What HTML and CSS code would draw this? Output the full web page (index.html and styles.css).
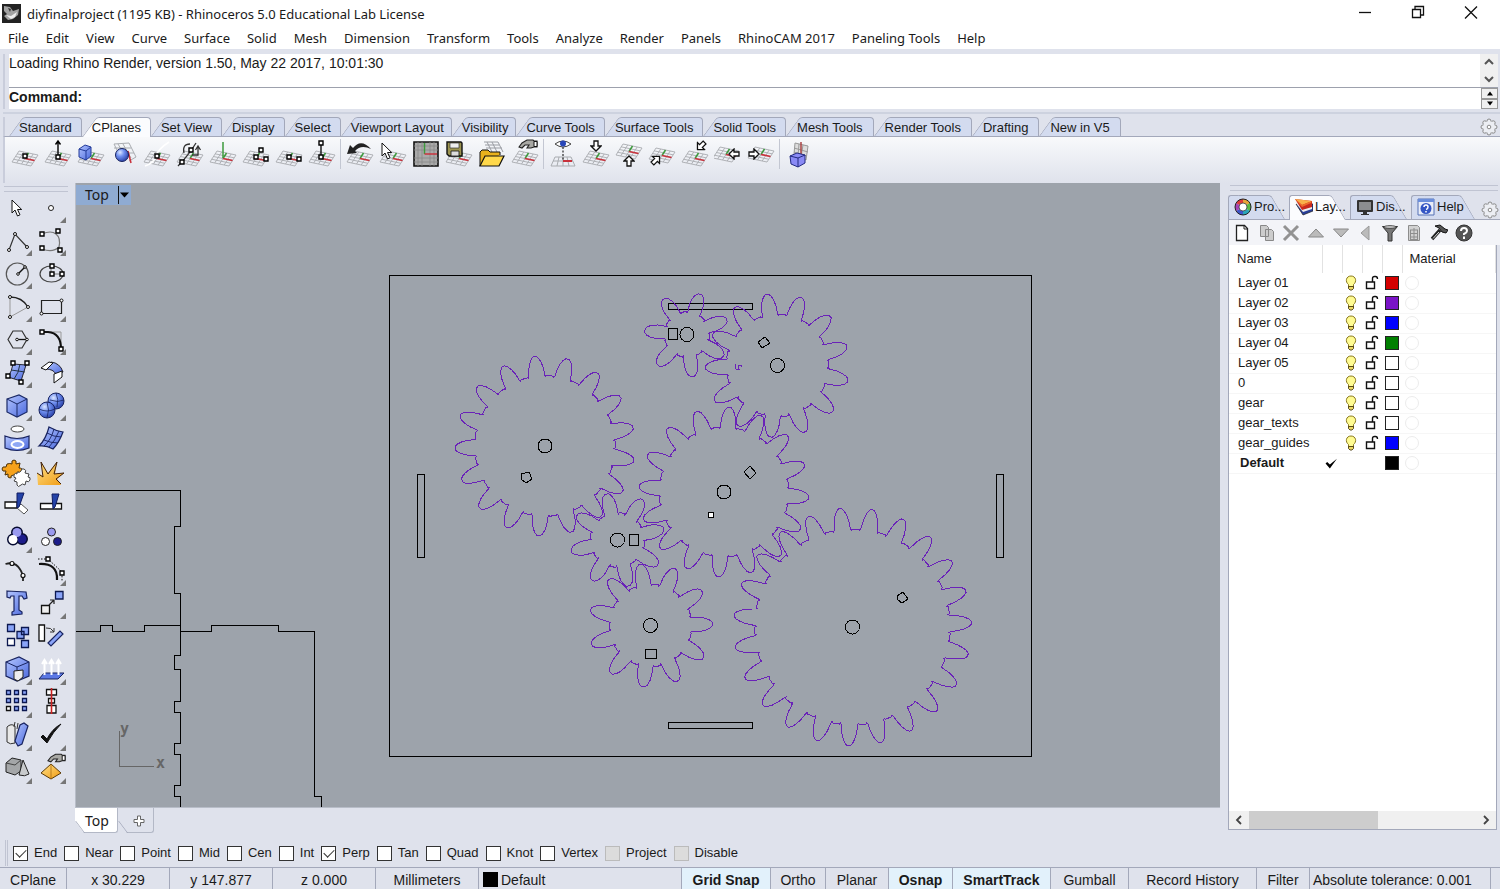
FILE: index.html
```html
<!DOCTYPE html>
<html lang="en">
<head>
<meta charset="utf-8">
<title>diyfinalproject (1195 KB) - Rhinoceros 5.0 Educational Lab License</title>
<link rel="stylesheet" href="styles.css">
</head>
<body>
<svg class="defs" aria-hidden="true">
  <defs>
    <linearGradient id="blue" x1="0" y1="0" x2="1" y2="1"><stop offset="0" stop-color="#b4c6ff"/><stop offset="1" stop-color="#4a68dd"/></linearGradient>
    <radialGradient id="ball" cx=".35" cy=".3" r=".8"><stop offset="0" stop-color="#dbe6ff"/><stop offset=".4" stop-color="#6f8ff0"/><stop offset="1" stop-color="#1e349c"/></radialGradient>
    <linearGradient id="gold" x1="0" y1="0" x2="1" y2="1"><stop offset="0" stop-color="#ffe28a"/><stop offset="1" stop-color="#f09a12"/></linearGradient>
    <symbol id="plane" viewBox="0 0 28 30">
      <path d="M8 12l19 4M6 14.800l19 4M4.500 17.500l19 4M2.500 20.200l19 4M1 23l19 4M8 12L1 23M12.700 13L5.700 24M17.500 14l-7 11M22.200 15l-7 11M27 16l-7 11" fill="none" stroke="#a9acb0" stroke-width=".9"/>
      <path d="M14 19.500L17.500 14" stroke="#3d9a3d" stroke-width="1.500"/><path d="M14 19.500l9.500 2" stroke="#c8323c" stroke-width="1.700"/>
    </symbol>
    <symbol id="node" viewBox="0 0 6 6"><path d="M1 1h4v4H1z" fill="#fff" stroke="#000" stroke-width="1.400"/></symbol>
    <symbol id="cursor" viewBox="0 0 12 18"><path d="M1 1v13l3-3 2.500 6 2.500-1.200L6.500 10.500h4.200z" fill="#fff" stroke="#111"/></symbol>
    <symbol id="hand" viewBox="0 0 20 10"><path d="M1 8l3-4 5-3h6l1 1h3v6h-3l-3 1H9l2-3H7L4 9z" fill="#a8a8a4" stroke="#222" stroke-width="1.100"/><path d="M16 2.500v5h3v-5z" fill="#fff" stroke="#111"/></symbol>
    <symbol id="darrow" viewBox="0 0 12 12"><path d="M4 1h4v5h3L6 11 1 6h3z" fill="#fff" stroke="#111" stroke-width="1.300"/></symbol>
    <symbol id="cog" viewBox="0 0 18 18"><g fill="#eceef3" stroke="#8a8a8a"><circle cx="9" cy="3" r="2"/><circle cx="13.200" cy="4.800" r="2"/><circle cx="15" cy="9" r="2"/><circle cx="13.200" cy="13.200" r="2"/><circle cx="9" cy="15" r="2"/><circle cx="4.800" cy="13.200" r="2"/><circle cx="3" cy="9" r="2"/><circle cx="4.800" cy="4.800" r="2"/></g><circle cx="9" cy="9" r="6" fill="#eceef3"/><circle cx="9" cy="9" r="1.800" fill="#fff" stroke="#8a8a8a"/></symbol>
    <symbol id="bulb" viewBox="0 0 12 16"><path d="M3.500 9.500C0 7 .8 1 6 1s6 6 2.500 8.500V12h-5z" fill="#fffb92" stroke="#8a7a20"/><path d="M3.500 11.500h5v2l-1.500 1.500H5l-1.500-1.500z" fill="#ecd960" stroke="#4a3b10" stroke-width=".9"/></symbol>
    <symbol id="lock" viewBox="0 0 14 16"><path d="M1.500 7h8v6.500h-8z" fill="#fff" stroke="#111" stroke-width="1.400"/><path d="M7.500 7V3.500q0-2 2-2h1q2 0 2 2.500" fill="none" stroke="#111" stroke-width="1.400"/></symbol>
    <symbol id="mat" viewBox="0 0 16 16"><circle cx="8" cy="8" r="6.500" fill="none" stroke="#ececec"/></symbol>
  </defs>
</svg>

<header class="titlebar">
  <svg class="app-icon" viewBox="0 0 19 19"><path d="M0 0h19v19H0z" fill="#222"/><path d="M2 2l6 1 3 4 6-2-1 6-5 4-5 1-4-4 3-2-3-3z" fill="#a2a2a2"/><path d="M4 11l5 1 6-4-2 5-4 2z" fill="#eee"/><path d="M6 4l3 1-1 3z" fill="#333"/></svg>
  <h1 class="title">diyfinalproject (1195 KB) - Rhinoceros 5.0 Educational Lab License</h1>
  <button class="win" aria-label="Minimize"><svg viewBox="0 0 14 14"><path d="M1 7.500h12" stroke="#111" stroke-width="1.300"/></svg></button>
  <button class="win" aria-label="Restore"><svg viewBox="0 0 14 14"><path d="M1.500 4.500h8v8h-8zM4 4.500v-3h8.500V10h-3" fill="none" stroke="#111" stroke-width="1.300"/></svg></button>
  <button class="win" aria-label="Close"><svg viewBox="0 0 14 14"><path d="M1 1.500l12 12M13 1.500l-12 12" stroke="#111" stroke-width="1.300"/></svg></button>
</header>

<nav class="menubar">
  <button>File</button><button>Edit</button><button>View</button><button>Curve</button><button>Surface</button><button>Solid</button><button>Mesh</button><button>Dimension</button><button>Transform</button><button>Tools</button><button>Analyze</button><button>Render</button><button>Panels</button><button>RhinoCAM 2017</button><button>Paneling Tools</button><button>Help</button>
</nav>

<section class="command">
  <div class="history"><p>Loading Rhino Render, version 1.50, May 22 2017, 10:01:30</p>
    <div class="vscroll"><button aria-label="Scroll up"><svg viewBox="0 0 10 8"><path d="M1 6l4-4 4 4" fill="none" stroke="#555" stroke-width="2"/></svg></button><button aria-label="Scroll down"><svg viewBox="0 0 10 8"><path d="M1 2l4 4 4-4" fill="none" stroke="#555" stroke-width="2"/></svg></button></div>
  </div>
  <div class="prompt"><label for="cmd">Command:</label><input id="cmd" type="text">
    <div class="spin"><button aria-label="Previous"><svg viewBox="0 0 8 5"><path d="M1 4.500l3-4 3 4z"/></svg></button><button aria-label="Next"><svg viewBox="0 0 8 5"><path d="M1 .5l3 4 3-4z"/></svg></button></div>
  </div>
</section>

<section class="toolbars">
  <div class="tabs">
    <button class="tab">Standard</button><button class="tab on">CPlanes</button><button class="tab">Set View</button><button class="tab">Display</button><button class="tab">Select</button><button class="tab tight">Viewport Layout</button><button class="tab tight">Visibility</button><button class="tab">Curve Tools</button><button class="tab">Surface Tools</button><button class="tab">Solid Tools</button><button class="tab wide">Mesh Tools</button><button class="tab wide">Render Tools</button><button class="tab wide">Drafting</button><button class="tab wide">New in V5</button>
    <button class="cog" aria-label="Toolbar options"><svg viewBox="0 0 18 18"><use href="#cog"/></svg></button>
  </div>
  <div class="tools">
    <button aria-label="CPlane origin"><svg viewBox="0 0 28 30"><use href="#plane"/><use href="#node" x="11" y="14" width="6" height="6"/></svg></button>
    <button aria-label="CPlane elevation"><svg viewBox="0 0 28 30"><use href="#plane"/><path d="M14 17V3M11.500 5.500L14 2l2.500 3.500" fill="none" stroke="#000" stroke-width="1.400"/><use href="#node" x="11" y="15" width="6" height="6"/></svg></button>
    <button aria-label="CPlane to object"><svg viewBox="0 0 28 30"><use href="#plane"/><path d="M2 10l6-4 6 2v9l-5 4-7-3z" fill="url(#blue)" stroke="#223a99"/><path d="M2 10l7 2 5-4M9 12v9" stroke="#223a99" fill="none"/></svg></button>
    <button aria-label="CPlane to surface"><svg viewBox="0 0 28 30"><path d="M4 5l15-1 7 14-7 4M8 5l7 12M13 5l8 14M4 9h17M6 14h18M4 5l4 8" stroke="#a9acb0" fill="none"/><path d="M18 12l3 12" stroke="#c8323c" stroke-width="1.500"/><circle cx="12" cy="16" r="6.500" fill="url(#ball)" stroke="#18235f"/></svg></button>
    <button aria-label="CPlane to curve"><svg viewBox="0 0 28 30"><use href="#plane"/><path d="M2 27q9-3 11-10T26 3" stroke="#fff" fill="none" stroke-width="1.500"/><use href="#node" x="11" y="14" width="6" height="6"/></svg></button>
    <button aria-label="CPlane perpendicular to curve"><svg viewBox="0 0 28 30"><use href="#plane"/><path d="M2 27q10-10 18-23M8 14Q6 5 14 5M16 16h6V8M19.500 11L22 7l2.500 4" stroke="#333" fill="none" stroke-width="1.300"/><use href="#node" x="12" y="8" width="6" height="6"/><use href="#node" x="3" y="20" width="6" height="6"/></svg></button>
    <button aria-label="CPlane Z axis"><svg viewBox="0 0 28 30"><use href="#plane"/><path d="M14 19V3" stroke="#3d9a3d" stroke-width="1.500"/></svg></button>
    <button aria-label="CPlane 3 points"><svg viewBox="0 0 28 30"><use href="#plane"/><use href="#node" x="11" y="15" width="6" height="6"/><use href="#node" x="16" y="8" width="6" height="6"/><use href="#node" x="21" y="17" width="6" height="6"/></svg></button>
    <button aria-label="CPlane X axis"><svg viewBox="0 0 28 30"><use href="#plane"/><use href="#node" x="11" y="15" width="6" height="6"/><use href="#node" x="21" y="17" width="6" height="6"/></svg></button>
    <button aria-label="CPlane vertical"><svg viewBox="0 0 28 30"><use href="#plane"/><path d="M13 18V5" stroke="#000" stroke-width="1.300"/><use href="#node" x="10" y="15" width="6" height="6"/><use href="#node" x="10" y="1" width="6" height="6"/></svg></button>
    <span class="sep"></span>
    <button aria-label="Previous CPlane"><svg viewBox="0 0 28 30"><use href="#plane"/><path d="M25 10Q15-1 7 9L4 6 1 15l10-1-2-2q6-7 16-2z" fill="#222"/></svg></button>
    <button aria-label="Select CPlane"><svg viewBox="0 0 28 30"><use href="#plane"/><use href="#cursor" x="2" y="3" width="12" height="18"/></svg></button>
    <button aria-label="Grid"><svg viewBox="0 0 28 30"><path d="M2 3h24v24H2z" fill="#aaa" stroke="#111" stroke-width="1.600"/><path d="M6 3v24M10 3v24M18 3v24M22 3v24M2 7h24M2 11h24M2 19h24M2 23h24" stroke="#888" stroke-width=".8"/><path d="M12.500 4v11" stroke="#3d9a3d" stroke-width="1.500"/><path d="M12.500 15H25" stroke="#c8323c" stroke-width="1.500"/></svg></button>
    <button aria-label="Save CPlane"><svg viewBox="0 0 28 30"><use href="#plane"/><path d="M2 3h14l1 1v13H4l-2-2z" fill="#9c9450" stroke="#111" stroke-width="1.400"/><path d="M5 4h9v5H5z" fill="#eee" stroke="#333" stroke-width=".7"/><path d="M6 12h8v5H6z" fill="#ddd" stroke="#111" stroke-width=".8"/></svg></button>
    <button aria-label="Open CPlane"><svg viewBox="0 0 28 30"><path d="M6 3h14l5 10M9 3l5 10M14 3l5 10M7 6h14M8 9h16" stroke="#9a9da3" fill="none"/><path d="M2 27V13l2-2h6l2 2h10v3" fill="#e9b21c" stroke="#111"/><path d="M2 27l5-10h19l-5 10z" fill="#ffd84a" stroke="#111" stroke-width="1.200"/></svg></button>
    <button aria-label="Edit CPlane"><svg viewBox="0 0 28 30"><use href="#plane"/><use href="#hand" x="7" y="0" width="20" height="10"/></svg></button>
    <span class="sep"></span>
    <button aria-label="CPlane to view"><svg viewBox="0 0 28 30"><path d="M6 18h16l4 9H2zM4 22h20M10 18l-2 9M14 18v9M18 18l2 9" fill="none" stroke="#a9acb0"/><path d="M14 8v14" stroke="#000" stroke-dasharray="2 1.500"/><path d="M14 22h9" stroke="#c8323c" stroke-width="2"/><path d="M6 5q8-6 16 0-8 6-16 0z" fill="#fff" stroke="#444"/><circle cx="14" cy="4.500" r="3" fill="#2846b8"/></svg></button>
    <button aria-label="World top"><svg viewBox="0 0 28 30"><use href="#plane"/><use href="#darrow" x="8" y="1" width="12" height="12"/></svg></button>
    <button aria-label="World bottom"><svg viewBox="0 0 28 30"><use href="#plane" y="-7"/><use href="#darrow" transform="translate(8 28) scale(1 -1)" width="12" height="12"/></svg></button>
    <button aria-label="World front"><svg viewBox="0 0 28 30"><use href="#plane" y="-3"/><use href="#darrow" transform="rotate(225 8 21) translate(2 15)" width="12" height="12"/></svg></button>
    <button aria-label="World back"><svg viewBox="0 0 28 30"><use href="#plane"/><use href="#darrow" transform="rotate(45 20 7) translate(14 1)" width="12" height="12"/></svg></button>
    <button aria-label="World left"><svg viewBox="0 0 28 30"><use href="#plane" x="-2" y="-4"/><use href="#darrow" transform="rotate(90 20 15) translate(14 9)" width="12" height="12"/></svg></button>
    <button aria-label="World right"><svg viewBox="0 0 28 30"><use href="#plane" y="-4"/><use href="#darrow" transform="rotate(-90 7 15) translate(1 9)" width="12" height="12"/></svg></button>
    <span class="sep"></span>
    <button aria-label="Named CPlanes"><svg viewBox="0 0 28 30"><path d="M10 4l13 3-2 14-12-6zM14 5l-1 12M18 6l-2 12M9 9l14 4M9 13l13 4" fill="#ddd" stroke="#999"/><path d="M16 3v12" stroke="#a44" stroke-width="1.500"/><path d="M5 17l7-3 8 2v8l-7 4-7-3z" fill="#8a8af5" stroke="#222a80"/><path d="M5 17l8 2 7-3M13 19v9" fill="none" stroke="#222a80"/></svg></button>
  </div>
</section>

<main class="work">
  <aside class="palette">
    <button aria-label="Select"><svg viewBox="0 0 33 33"><use href="#cursor" x="11" y="8" width="12" height="18"/></svg></button>
    <button class="more" aria-label="Point"><svg viewBox="0 0 33 33"><circle cx="17" cy="17" r="2.500" fill="#fff" stroke="#222"/></svg></button>
    <button class="more" aria-label="Polyline"><svg viewBox="0 0 33 33"><path d="M9 26l6-16 12 13" fill="none" stroke="#333" stroke-width="1.200"/><g fill="#fff" stroke="#111"><circle cx="9" cy="26" r="1.500"/><circle cx="15" cy="10" r="1.500"/><circle cx="27" cy="23" r="1.500"/></g></svg></button>
    <button class="more" aria-label="Curve"><svg viewBox="0 0 33 33"><path d="M8 10q9-4 14 0t3 13q-6 6-17 2" fill="none" stroke="#777" stroke-width="1.200"/><use href="#node" x="5" y="7" width="6" height="6"/><use href="#node" x="21" y="4" width="6" height="6"/><use href="#node" x="5" y="21" width="6" height="6"/><use href="#node" x="23" y="23" width="6" height="6"/></svg></button>
    <button class="more" aria-label="Circle"><svg viewBox="0 0 33 33"><circle cx="17.300" cy="17" r="11" fill="none" stroke="#555" stroke-width="1.200"/><path d="M18 17l7-7" stroke="#111" stroke-width="1.400"/><g fill="#fff" stroke="#111"><circle cx="18" cy="17" r="1.300"/><circle cx="25" cy="10" r="1.300"/></g></svg></button>
    <button class="more" aria-label="Ellipse"><svg viewBox="0 0 33 33"><ellipse cx="17.500" cy="17" rx="11.500" ry="8" fill="none" stroke="#444" stroke-width="1.200"/><path d="M17 10v7h11" fill="none" stroke="#777"/><use href="#node" x="15" y="6" width="6" height="6"/><use href="#node" x="15" y="14" width="6" height="6"/><use href="#node" x="25" y="14" width="6" height="6"/></svg></button>
    <button class="more" aria-label="Arc"><svg viewBox="0 0 33 33"><path d="M28 17L10 27V7" fill="none" stroke="#999"/><path d="M10 7q12 0 18 10" fill="none" stroke="#222" stroke-width="1.300"/><g fill="#fff" stroke="#111"><circle cx="10" cy="7" r="1.500"/><circle cx="28" cy="17" r="1.500"/><circle cx="10" cy="27" r="1.500"/></g></svg></button>
    <button class="more" aria-label="Rectangle"><svg viewBox="0 0 33 33"><path d="M7.500 10.500h20v13h-20z" fill="none" stroke="#222" stroke-width="1.200"/><g fill="#fff" stroke="#111"><circle cx="7.500" cy="23.500" r="1.500"/><circle cx="27.500" cy="10.500" r="1.500"/></g></svg></button>
    <button class="more" aria-label="Polygon"><svg viewBox="0 0 33 33"><path d="M8 16.500L13 8h9l5 8.500-5 8.500h-9z" fill="none" stroke="#333" stroke-width="1.200"/><path d="M17 16.500h10" stroke="#111" stroke-width="1.300"/><g fill="#fff" stroke="#111"><circle cx="17" cy="16.500" r="1.300"/><circle cx="27" cy="16.500" r="1.300"/></g></svg></button>
    <button class="more" aria-label="Fillet"><svg viewBox="0 0 33 33"><path d="M8 9h19v17" fill="none" stroke="#999"/><path d="M8 9h6q13 1 13 17" fill="none" stroke="#111" stroke-width="2"/><use href="#node" x="5" y="6" width="6" height="6"/><use href="#node" x="24" y="23" width="6" height="6"/></svg></button>
    <button class="more" aria-label="Surface"><svg viewBox="0 0 33 33"><path d="M13 8l13 1-5 16-13-4q4-6 5-13z" fill="url(#blue)" stroke="#223"/><path d="M11 14l14 2M20 8q-1 9-6 15" fill="none" stroke="#234"/><use href="#node" x="10" y="4" width="6" height="6"/><use href="#node" x="24" y="4" width="6" height="6"/><use href="#node" x="5" y="17" width="6" height="6"/><use href="#node" x="18" y="23" width="6" height="6"/></svg></button>
    <button class="more" aria-label="Loft"><svg viewBox="0 0 33 33"><path d="M12 13l5-7q9 1 12 10l-7 2q-3-5-10-5z" fill="url(#blue)" stroke="#223"/><path d="M7 12l8-6 4 1-7 7z" fill="#fff" stroke="#111"/><path d="M20 18l8-3v6l-8 6z" fill="#fff" stroke="#111"/></svg></button>
    <button class="more" aria-label="Box"><svg viewBox="0 0 33 33"><path d="M7 10l12-4 8 4v13l-10 5-10-5z" fill="url(#blue)" stroke="#1a2966" stroke-width="1.200"/><path d="M7 10l10 5 10-5M17 15v13" fill="none" stroke="#1a2966"/></svg></button>
    <button class="more" aria-label="Boolean"><svg viewBox="0 0 33 33"><circle cx="22" cy="12" r="8" fill="url(#ball)" stroke="#18235f"/><circle cx="13" cy="21" r="8" fill="url(#ball)" stroke="#18235f"/><path d="M5 20q8 4 16 0M13 13q3 8 0 16M22 4q3 6 1 14M16 11q8 3 14 0" stroke="#18235f" fill="none" stroke-width=".8"/></svg></button>
    <button class="more" aria-label="Project"><svg viewBox="0 0 33 33"><ellipse cx="17.500" cy="7" rx="6.500" ry="3" fill="#fff" stroke="#444"/><path d="M5 14q12 5 24 0v12q-12 5-24 0z" fill="url(#blue)" stroke="#18235f" stroke-width="1.200"/><ellipse cx="17.500" cy="22.500" rx="6" ry="3.500" fill="#8fa8f4" stroke="#fff" stroke-width="2"/></svg></button>
    <button class="more" aria-label="Mesh"><svg viewBox="0 0 33 33"><path d="M15 5q7 4 14 5-4 11-10 17-7-4-14-3 7-7 10-19z" fill="url(#blue)" stroke="#18235f" stroke-width="1.200"/><path d="M20 7q-3 11-10 17M25 9q-4 10-10 16M13 11q7 4 14 4M10 18q7 3 14 3" fill="none" stroke="#18235f" stroke-width=".9"/></svg></button>
    <button aria-label="Join"><svg viewBox="0 0 33 33"><path d="M7 9q3-1 5 0-1-4 2-4t2 4l4-1-1 5q4 0 3 3t-4 1l-2 4q-3-2-5 0 1 2-1 2-3 0-2-4l-3 1 1-4q-4 1-4-2t4-2z" fill="#f6a21c" stroke="#4d3208"/><path d="M17 17q3 1 4-1 0-3 3-2t1 4l4 1-1 3q3 0 2 3t-4 1l-1 4q-3-2-4 0-3 3-4 0v-3l-3-1 2-3q-3 0-2-3t3-1z" fill="#fff" stroke="#444"/></svg></button>
    <button aria-label="Explode"><svg viewBox="0 0 33 33"><path d="M3 18l6 3L7 7l7 11L23 7l-2 12 9-1-7 6 4 6H4z" fill="url(#gold)"/><path d="M3 18l6 4L7 7l7 12L23 7l-3 12 10-1-8 6 5 5" fill="none" stroke="#41210a"/></svg></button>
    <button aria-label="Trim"><svg viewBox="0 0 33 33"><path d="M5 14h12v6H5z" fill="#fff" stroke="#111" stroke-width="1.300"/><path d="M17 20l4-4 7 6-4 4z" fill="#fff" stroke="#555"/><path d="M17 5h7l-5 14-2 1z" fill="#2443a8" stroke="#101c60"/></svg></button>
    <button aria-label="Split"><svg viewBox="0 0 33 33"><path d="M6.500 15.500h21V21h-21z" fill="#fff" stroke="#111" stroke-width="1.300"/><path d="M18 6h7l-4 13-2 2z" fill="#2443a8" stroke="#101c60"/></svg></button>
    <button class="more" aria-label="Group"><svg viewBox="0 0 33 33"><g stroke="#050a30" stroke-width="4"><circle cx="17" cy="11.500" r="4"/><circle cx="13" cy="18.500" r="4"/><circle cx="22" cy="18" r="4"/></g><circle cx="22" cy="18" r="4.500" fill="#1c1c8a"/><circle cx="17" cy="11.500" r="4.500" fill="#9a9af0"/><circle cx="13" cy="18.500" r="4.500" fill="#fff"/></svg></button>
    <button aria-label="Ungroup"><svg viewBox="0 0 33 33"><g stroke="#222"><circle cx="17.500" cy="11" r="4" fill="#9a9af0"/><circle cx="11.500" cy="20.500" r="4" fill="#fff"/><circle cx="23.500" cy="20.500" r="4" fill="#1c1c8a"/></g></svg></button>
    <button aria-label="Edit points"><svg viewBox="0 0 33 33"><path d="M5.500 10q10-3 15 6 3 5 2.500 11" fill="none" stroke="#222" stroke-width="1.800"/><g fill="#fff" stroke="#111" stroke-width="1.200"><circle cx="12" cy="9.500" r="2"/><circle cx="23" cy="21.500" r="2"/></g></svg></button>
    <button class="more" aria-label="Control points"><svg viewBox="0 0 33 33"><path d="M5 10q19-1 18 16" fill="none" stroke="#111" stroke-width="2.200"/><path d="M4 5h10l14 13v9" fill="none" stroke="#111" stroke-dasharray="1.500 1.500"/><use href="#node" x="11" y="2" width="6" height="6"/><use href="#node" x="25" y="16" width="6" height="6"/></svg></button>
    <button aria-label="Text"><svg viewBox="0 0 33 33"><path d="M7 4l19 1 1 6-3 1-2-3h-3v14l3 2v2l-10 1v-3l2-1V9h-3l-1 2-3-1z" fill="url(#blue)" stroke="#18235f" stroke-width="1.200"/></svg></button>
    <button class="more" aria-label="Move"><svg viewBox="0 0 33 33"><path d="M7.500 18.500h8v8h-8z" fill="#eee" stroke="#111" stroke-width="1.300"/><path d="M21.500 4.500H29V12h-7.500z" fill="#8aa4f8" stroke="#0c1850" stroke-width="1.300"/><path d="M15 18l5-5M16 13h4v4" fill="none" stroke="#222" stroke-width="1.200"/></svg></button>
    <button aria-label="Copy"><svg viewBox="0 0 33 33"><g fill="#8aa4f8" stroke="#0c1850" stroke-width="1.300"><path d="M7.500 4.500h7v7h-7zM21.500 7.500h7v7h-7zM17 11.500h7v7h-7zM21.500 20.500h7v7h-7z"/><path d="M7.500 18.500h7v7h-7z" fill="#fff"/></g></svg></button>
    <button aria-label="Rotate"><svg viewBox="0 0 33 33"><path d="M5 5h5.500v16H5z" fill="#fff" stroke="#111" stroke-width="1.300"/><path d="M14 23L26 11l3 3-12 12z" fill="#8aa4f8" stroke="#18235f" stroke-width="1.200"/><path d="M12 8q5-1 8 4M20 8v4h-4" fill="none" stroke="#333"/></svg></button>
    <button class="more" aria-label="Solid edit"><svg viewBox="0 0 33 33"><path d="M6 9l13-5 10 5v14l-12 5-11-5z" fill="url(#blue)" stroke="#18235f" stroke-width="1.200"/><path d="M6 9l11 5 12-5M17 14v5" fill="none" stroke="#18235f"/><path d="M14 18l9-1v7l-5 4-4-2z" fill="#eee" stroke="#222"/></svg></button>
    <button class="more" aria-label="Extrude"><svg viewBox="0 0 33 33"><path d="M5 26l5-6h20l-6 6z" fill="#5b78e4" stroke="#18235f"/><path d="M10.500 22V8M8 11l2.500-4 2.500 4M17.500 22V8M15 11l2.500-4 2.500 4M24.500 22V8M22 11l2.500-4 2.500 4" fill="none" stroke="#fff" stroke-width="2"/></svg></button>
    <button class="more" aria-label="Array"><svg viewBox="0 0 33 33"><path d="M6.500 4.500h4v4h-4zM14.500 4.500h4v4h-4zM22.500 4.500h4v4h-4zM6.500 12.500h4v4h-4zM14.500 12.500h4v4h-4zM22.500 12.500h4v4h-4zM14.500 20.500h4v4h-4zM22.500 20.500h4v4h-4z" fill="#8aa4f8" stroke="#0c1850" stroke-width="1.300"/><path d="M6.500 20.500h4v4h-4z" fill="#fff" stroke="#111" stroke-width="1.300"/></svg></button>
    <button class="more" aria-label="Align"><svg viewBox="0 0 33 33"><path d="M12.500 3.500h10V9h-10zM14.500 12.500h6V17h-6zM13 19.500h9V27h-9z" fill="#fff" stroke="#111" stroke-width="1.300"/><path d="M17.500 2v26" stroke="#c22" stroke-width="1.600"/></svg></button>
    <button class="more" aria-label="Bend"><svg viewBox="0 0 33 33"><path d="M7 8q4-4 8-1v17q-5 2-8-1z" fill="#e8e8e8" stroke="#333"/><path d="M15 22l5-16 4-2 4 3-6 18-4 2z" fill="url(#blue)" stroke="#18235f" stroke-width="1.200"/><path d="M15 3l-1 5M18 4l-1 6" stroke="#333" fill="none"/></svg></button>
    <button class="more" aria-label="Check"><svg viewBox="0 0 33 33"><path d="M7 18l2-2 4 4Q18 10 27 5q-8 8-14 19z" fill="#111" stroke="#111"/></svg></button>
    <button class="more" aria-label="Shade"><svg viewBox="0 0 33 33"><path d="M6 11l6-5 9 2v11l-6 4-9-3z" fill="#a4a6a8" stroke="#222"/><path d="M6 11l9 2 6-5" fill="none" stroke="#444"/><path d="M23 8l6 14q-4 3-10 1z" fill="#c8cacc" stroke="#222"/></svg></button>
    <button class="more" aria-label="Render settings"><svg viewBox="0 0 33 33"><path d="M17 12l10 9-10 6-10-6z" fill="url(#gold)" stroke="#5b3b08"/><path d="M17 12v15" stroke="#a86b10" stroke-width=".8"/><use href="#hand" x="13" y="1" width="19" height="10"/></svg></button>
  </aside>

  <section class="view">
    <div class="viewport">
      <svg class="drawing" viewBox="75 183 1145 625" preserveAspectRatio="xMinYMin slice">
        <g class="ink">
          <path d="M389.500 275.500h642v481h-642zM668.500 303.500h84v6h-84zM668.500 722.500h84v6h-84zM417.500 474.500h7v83h-7zM996.500 474.500h7v83h-7z"/>
          <path d="M75 490.500h105.500v36h-6v67h6v62h-6v14h6v32h-6v11h6v31h-6v11h6v31h-6v11h6V808"/>
          <path d="M75 631.500h25.500v-5q0-1 1-1h10q1 0 1 1v5h32v-6h36M180.500 631.500h31v-6h67v6h36v165h6.500V808"/>
          <rect x="668.500" y="328.500" width="9" height="11" rx="1"/><rect x="629.500" y="534.500" width="9" height="11" rx="1"/><rect x="645.500" y="649.500" width="11" height="9" rx="1"/>
          <path d="M758 342l7-5 5 6-8 5zM744 472l6-6 6 7-6 6zM521 474l8-2 3 7-6 4-5-4zM897 596l6-4 5 7-6 4-4-3z"/>
          <path class="seed" d="M708.500 512.500h5v5h-5z"/>
        </g>
        <g id="gears" class="gears"></g>
        <path class="gears" d="M735 364l1 5h3l-1-4h3l1 2"/>
        <g class="axis"><path d="M119.500 731v35H154"/><text x="120" y="734">y</text><text x="156" y="768">x</text></g>
      </svg>
      <button class="viewname">Top<span class="bar"></span><svg viewBox="0 0 9 6"><path d="M0 .5h9L4.500 5.500z"/></svg></button>
    </div>
    <div class="viewtabs">
      <button class="vtab on">Top</button>
      <button class="vtab add" aria-label="New viewport"><svg viewBox="0 0 12 12"><path d="M4.500 1h3v3.500H11v3H7.500V11h-3V7.500H1v-3h3.500z" fill="#fff" stroke="#666"/></svg></button>
    </div>
  </section>

  <aside class="panel">
    <div class="ptabs">
      <button class="tab"><svg viewBox="0 0 18 18"><g fill="none" stroke-width="4"><path d="M9 3a6 6 0 0 1 5.200 3" stroke="#e8a33a"/><path d="M14.200 6a6 6 0 0 1 0 6" stroke="#58b947"/><path d="M14.200 12A6 6 0 0 1 9 15" stroke="#2aa6b8"/><path d="M9 15a6 6 0 0 1-5.200-3" stroke="#3f55c9"/><path d="M3.800 12a6 6 0 0 1 0-6" stroke="#a444b8"/><path d="M3.800 6A6 6 0 0 1 9 3" stroke="#dc3a3a"/></g><circle cx="9" cy="9" r="8" fill="none" stroke="#222"/><circle cx="9" cy="9" r="4" fill="#fff" stroke="#222" stroke-width=".7"/></svg>Pro...</button>
      <button class="tab on"><svg viewBox="0 0 18 18"><path d="M1 6l7 11 10-4V6z" fill="#283f9a" stroke="#222" stroke-width=".7"/><path d="M0 4l8 10 9-3V6z" fill="#eee"/><path d="M0 1l7 11 10-3V3z" fill="#c8281e"/><path d="M0 1l7 6 10-4z" fill="#f8b04a"/><path d="M0 1l7 6 10-4-1 2-9 4z" fill="#ee6a2c"/></svg>Lay...</button>
      <button class="tab"><svg viewBox="0 0 18 18"><rect x="1" y="2" width="16" height="12" rx="1" fill="#333"/><path d="M3 4h12v8H3z" fill="#8b8d90"/><path d="M7 14h4v2h2v1H5v-1h2z" fill="#333"/></svg>Dis...</button>
      <button class="tab"><svg viewBox="0 0 18 18"><path d="M1 1h16v16H1z" fill="#e8edf8" stroke="#5571b5"/><path d="M1 1h16v3H1z" fill="#6b8edb"/><circle cx="9" cy="10.500" r="5.500" fill="#3456c4"/><path d="M7 9q0-2 2-2t2 2-2 2.500M9 13v1.500" stroke="#fff" stroke-width="1.500" fill="none"/></svg>Help</button>
      <button class="cog" aria-label="Panel options"><svg viewBox="0 0 18 18"><use href="#cog"/></svg></button>
    </div>
    <div class="ptools">
      <button aria-label="New layer"><svg viewBox="0 0 18 18"><path d="M3.500 1.500h8l3 3v12h-11z" fill="#fff" stroke="#222" stroke-width="1.300"/><path d="M11 1.500V5h3.500" fill="none" stroke="#222"/></svg></button>
      <button aria-label="New sublayer"><svg viewBox="0 0 18 18"><path d="M2.500 1.500h6l2 2v9h-8zM7.500 5.500h6l2 2v9h-8z" fill="#ccc" stroke="#888"/></svg></button>
      <button aria-label="Delete"><svg viewBox="0 0 18 18"><path d="M2 2l14 14M16 2L2 16" stroke="#929292" stroke-width="3"/></svg></button>
      <button aria-label="Move up"><svg viewBox="0 0 18 18"><path d="M1.500 13L9 5l7.500 8z" fill="#bbb" stroke="#888"/></svg></button>
      <button aria-label="Move down"><svg viewBox="0 0 18 18"><path d="M1.500 5L9 13l7.500-8z" fill="#bbb" stroke="#888"/></svg></button>
      <button aria-label="Move up one parent"><svg viewBox="0 0 18 18"><path d="M13 2v14L5 9z" fill="#bbb" stroke="#999"/></svg></button>
      <button aria-label="Filter"><svg viewBox="0 0 18 18"><path d="M1.500 2.500h15L11 9v8H7V9z" fill="#777" stroke="#333"/><ellipse cx="9" cy="3" rx="6" ry="1.500" fill="#bbb" stroke="#333" stroke-width=".7"/></svg></button>
      <button aria-label="Columns"><svg viewBox="0 0 18 18"><path d="M3.500 1.500h9l2 2v13h-11zM5 6h8M5 9.500h8M5 13h8M9 4v11M5.500 6v9M12.500 6v9M5 15.500h8" fill="#d2d2d2" stroke="#8d8d8d"/></svg></button>
      <button aria-label="Tools"><svg viewBox="0 0 18 18"><path d="M2 15L10 6" stroke="#222" stroke-width="3.400"/><path d="M3 14.500L9 8" stroke="#ddd"/><path d="M5 2l5-1 5 4 3 1-2 3-4-1-3-4z" fill="#555" stroke="#111"/></svg></button>
      <button aria-label="Help"><svg viewBox="0 0 18 18"><circle cx="9" cy="9" r="8" fill="#555" stroke="#333"/><path d="M6 7q0-3 3-3t3 3q0 1.500-3 3v1M9 12.500V15" fill="none" stroke="#fff" stroke-width="2"/></svg></button>
    </div>
    <div class="layers">
      <table>
        <colgroup><col class="c-name"><col class="c-i"><col class="c-i"><col class="c-i"><col class="c-i"><col class="c-mat"></colgroup>
        <thead><tr><th>Name</th><th></th><th></th><th></th><th></th><th>Material</th></tr></thead>
        <tbody>
          <tr><td>Layer 01</td><td></td><td><svg class="bulb"><use href="#bulb"/></svg></td><td><svg class="lock"><use href="#lock"/></svg></td><td><i class="sw red"></i></td><td><svg class="mat"><use href="#mat"/></svg></td></tr>
          <tr><td>Layer 02</td><td></td><td><svg class="bulb"><use href="#bulb"/></svg></td><td><svg class="lock"><use href="#lock"/></svg></td><td><i class="sw purple"></i></td><td><svg class="mat"><use href="#mat"/></svg></td></tr>
          <tr><td>Layer 03</td><td></td><td><svg class="bulb"><use href="#bulb"/></svg></td><td><svg class="lock"><use href="#lock"/></svg></td><td><i class="sw blue"></i></td><td><svg class="mat"><use href="#mat"/></svg></td></tr>
          <tr><td>Layer 04</td><td></td><td><svg class="bulb"><use href="#bulb"/></svg></td><td><svg class="lock"><use href="#lock"/></svg></td><td><i class="sw green"></i></td><td><svg class="mat"><use href="#mat"/></svg></td></tr>
          <tr><td>Layer 05</td><td></td><td><svg class="bulb"><use href="#bulb"/></svg></td><td><svg class="lock"><use href="#lock"/></svg></td><td><i class="sw"></i></td><td><svg class="mat"><use href="#mat"/></svg></td></tr>
          <tr><td>0</td><td></td><td><svg class="bulb"><use href="#bulb"/></svg></td><td><svg class="lock"><use href="#lock"/></svg></td><td><i class="sw"></i></td><td><svg class="mat"><use href="#mat"/></svg></td></tr>
          <tr><td>gear</td><td></td><td><svg class="bulb"><use href="#bulb"/></svg></td><td><svg class="lock"><use href="#lock"/></svg></td><td><i class="sw"></i></td><td><svg class="mat"><use href="#mat"/></svg></td></tr>
          <tr><td>gear_texts</td><td></td><td><svg class="bulb"><use href="#bulb"/></svg></td><td><svg class="lock"><use href="#lock"/></svg></td><td><i class="sw"></i></td><td><svg class="mat"><use href="#mat"/></svg></td></tr>
          <tr><td>gear_guides</td><td></td><td><svg class="bulb"><use href="#bulb"/></svg></td><td><svg class="lock"><use href="#lock"/></svg></td><td><i class="sw blue"></i></td><td><svg class="mat"><use href="#mat"/></svg></td></tr>
          <tr class="current"><td>Default</td><td><svg class="tick" viewBox="0 0 12 10"><path d="M.5 5l1.500-1.500L4.500 6 11 .5 4.500 9.500z"/></svg></td><td></td><td></td><td><i class="sw black"></i></td><td><svg class="mat"><use href="#mat"/></svg></td></tr>
        </tbody>
      </table>
    </div>
    <div class="hscroll"><button aria-label="Scroll left"><svg viewBox="0 0 8 10"><path d="M6 1L2 5l4 4" fill="none" stroke="#444" stroke-width="1.800"/></svg></button><div class="track"><div class="thumb"></div></div><button aria-label="Scroll right"><svg viewBox="0 0 8 10"><path d="M2 1l4 4-4 4" fill="none" stroke="#444" stroke-width="1.800"/></svg></button></div>
  </aside>
</main>

<form class="osnap">
  <label><input type="checkbox" checked>End</label><label><input type="checkbox">Near</label><label><input type="checkbox">Point</label><label><input type="checkbox">Mid</label><label><input type="checkbox">Cen</label><label><input type="checkbox">Int</label><label><input type="checkbox" checked>Perp</label><label><input type="checkbox">Tan</label><label><input type="checkbox">Quad</label><label><input type="checkbox">Knot</label><label><input type="checkbox">Vertex</label><label><input type="checkbox" disabled>Project</label><label><input type="checkbox" disabled>Disable</label>
</form>

<footer class="status">
  <button>CPlane</button><span>x 30.229</span><span>y 147.877</span><span>z 0.000</span><span>Millimeters</span><button class="layer"><i></i>Default</button><button class="on">Grid Snap</button><button>Ortho</button><button>Planar</button><button class="on">Osnap</button><button class="on">SmartTrack</button><button>Gumball</button><button>Record History</button><button>Filter</button><span>Absolute tolerance: 0.001</span><span></span>
</footer>
<script src="gears.js"></script>
</body>
</html>
```

FILE: styles.css
```css
* { box-sizing: border-box; }
body {
  margin: 0;
  min-height: 100vh;
  display: flex;
  flex-direction: column;
  background: #dfe2ec;
  color: #1a1a1a;
  font: 13px/16px "Liberation Sans", Arial, sans-serif;
  overflow: hidden;
}
button {
  margin: 0;
  padding: 0;
  border: 0;
  background: none;
  color: inherit;
  font: inherit;
  display: flex;
  align-items: center;
  justify-content: center;
  white-space: nowrap;
}
svg { display: block; flex: none; }
.defs { position: absolute; width: 0; height: 0; }

.titlebar { display: flex; align-items: center; height: 27px; background: #fff; padding: 0 3px 0 2px; }
.app-icon { width: 19px; height: 19px; margin-right: 6px; }
.title { flex: 1; margin: 0; font: 13px/20px "Noto Sans", sans-serif; }
.win { width: 53px; height: 24px; align-self: flex-start; }
.win svg { width: 14px; height: 14px; }

.menubar { display: flex; gap: 17px; height: 22px; padding-left: 8px; background: #fff; font: 13px/20px "Noto Sans", sans-serif; }

.command { margin-top: 5px; margin-left: 3px; padding: 0 2px 0 4px; border-left: 2px solid #c9cddb; }
.history { display: flex; height: 34px; background: #fff; border-bottom: 1px solid #9da1ad; }
.history p { flex: 1; margin: 0; font-size: 14px; line-height: 18px; }
.vscroll { width: 18px; background: #f0f0f0; display: flex; flex-direction: column; justify-content: space-around; }
.vscroll svg { width: 10px; height: 8px; }
.prompt { display: flex; height: 21px; background: #fff; }
.prompt label { font-weight: bold; font-size: 14px; line-height: 18px; }
.prompt input { flex: 1; border: 0; outline: 0; background: none; }
.spin { width: 17px; display: flex; flex-direction: column; }
.spin button { flex: 1; border: 1px solid #999; background: #f0f0f0; }
.spin svg { width: 8px; height: 5px; }

.toolbars { margin: 3px 0 0 3px; border-top: 2px solid #cdd2df; padding-top: 3px; }
.tabs { display: flex; height: 20px; padding-left: 4px; border-bottom: 1px solid #a3a8ba; border-left: 2px solid #c9cddb; }
.tab { position: relative; z-index: 0; height: 19px; padding: 2px 10px 0; }
.tab.tight { padding: 2px 8px 0 10px; }
.tab.wide { padding: 2px 11px 0; }
.tab::before, .tab::after {
  content: "";
  position: absolute;
  z-index: -1;
  top: 0;
  bottom: 0;
  background: #d3dbef;
  border-top: 1px solid #a3a8ba;
}
.tab::before { left: 0; right: 50%; border-left: 1px solid #a3a8ba; transform: skewX(-36deg); transform-origin: bottom; border-radius: 3px 0 0 0; }
.tab::after { left: 40%; right: 0; border-right: 1px solid #a3a8ba; border-radius: 0 4px 0 0; }
.tab.on { z-index: 1; height: 20px; }
.tab.on::before, .tab.on::after { background: #fbfcfe; }
.cog { margin-left: auto; margin-right: 2px; }
.cog svg { width: 18px; height: 18px; }
.tools { display: flex; height: 46px; padding-left: 3px; background: linear-gradient(#f8f9fb, #dfe2ec); border-left: 2px solid #c9cddb; }
.tools button { width: 33px; height: 34px; }
.tools svg { width: 28px; height: 30px; }
.sep { width: 1px; height: 30px; margin: 2px 2px 0; background: #c3c7d2; }

.work { flex: 1; display: grid; grid-template-columns: 75px 1fr 272px; min-height: 0; }
.palette { display: grid; grid-template: 5px / 33px 34px; grid-auto-rows: 33px; align-content: start; margin-top: 3px; }
.palette::before { content: ""; grid-column: 1 / 3; height: 4px; margin: 0 -1px 1px 4px; border: solid #c0c4d2; border-width: 1px 0; }
.palette button { position: relative; }
.palette svg { width: 33px; height: 33px; }
.more::after { content: ""; position: absolute; right: 1px; bottom: 1px; border: 3px solid; border-color: transparent #777 #777 transparent; }

.view { display: flex; flex-direction: column; min-width: 0; margin-right: 8px; }
.viewport { flex: 1; position: relative; background: #9da3ab; border-left: 1px solid #b8bdc8; overflow: hidden; min-height: 0; }
.drawing { position: absolute; left: -1px; top: 0; width: calc(100% + 1px); height: 100%; shape-rendering: crispEdges; }
.ink { fill: none; stroke: #000; }
.seed { fill: #fff; }
.gears { fill: none; stroke: #6a22b8; }
.gears circle { stroke: #000; }
.axis path { fill: none; stroke: #666; }
.axis text { fill: #666; font: bold 15px "DejaVu Sans Mono", monospace; }
.viewname { position: absolute; left: 0; top: 2px; height: 20px; padding: 0 2px 0 9px; background: #8fabd2; font: 14px/20px "Noto Sans", sans-serif; }
.bar { width: 1px; height: 18px; margin: 0 1px 0 9px; background: #111; }
.viewname svg { width: 9px; height: 6px; }
.viewtabs { display: flex; height: 27px; border-top: 1px solid #b8bdc8; }
.vtab { position: relative; width: 43px; height: 25px; padding: 2px 0 0 2px; border: solid #b3b8c6; border-width: 0 1px 1px 0; border-radius: 0 0 3px 0; font: 14px/20px "Noto Sans", sans-serif; clip-path: polygon(0 0, 100% 0, 100% 100%, 9px 100%, 0 calc(100% - 12px)); }
.vtab::after { content: ""; position: absolute; left: 0; bottom: -1px; height: 12px; border-left: 1px solid #a3a8ba; transform: skewX(37deg); transform-origin: top left; }
.vtab.on { background: #fff; }
.vtab.add { width: 36px; padding-left: 7px; }
.vtab svg { width: 12px; height: 12px; }

.panel { display: flex; flex-direction: column; margin: 2px 0 4px; min-width: 0; }
.panel::before { content: ""; flex: none; height: 4px; margin: 0 2px 4px; border: solid #c0c4d2; border-width: 1px 0; }
.ptabs { display: flex; flex: none; height: 25px; border-bottom: 1px solid #a3a8ba; }
.ptabs .tab { height: 24px; width: 61px; padding: 0 2px 1px 6px; gap: 2px; justify-content: flex-start; }
.ptabs .tab.on { height: 25px; padding-bottom: 2px; }
.ptabs .tab:nth-child(4) { width: 68px; }
.ptabs .tab::before { transform: none; }
.ptabs .tab::after { transform: skewX(30deg); transform-origin: bottom; border-radius: 0 3px 0 0; right: 4px; }
.ptabs .tab svg { width: 18px; height: 18px; }
.ptabs .cog { margin-right: 1px; align-self: flex-end; }
.ptools { display: flex; flex: none; height: 25px; padding-left: 1px; background: #f3f4f8; border-left: 1px solid #a3a8ba; }
.ptools button { flex: 0 1 25px; }
.ptools { padding-right: 24px; }
.ptools svg { width: 18px; height: 18px; }
.layers { flex: 1; background: #fff; border: solid #a3a8ba; border-width: 0 1px; margin-right: 3px; overflow: hidden; min-height: 0; }
table { width: 100%; border-collapse: collapse; table-layout: fixed; font-size: 13px; }
.c-name { width: 93px; }
.c-i { width: 20px; }
th, td { padding: 0 0 0 8px; text-align: left; white-space: nowrap; }
th { height: 28px; font-weight: normal; border-right: 1px solid #e2e2e2; }
td { height: 20px; border-bottom: 1px solid #f6f6f6; padding-left: 9px; }
td:nth-child(n + 2), th:nth-child(n + 2) { padding: 0 0 0 3px; }
th:last-child { padding-left: 7px; }
td:last-child { padding-left: 2px; }
.current { font-weight: bold; }
.current td:first-child { padding-left: 11px; }
.bulb { width: 12px; height: 16px; }
.lock { width: 14px; height: 16px; }
.mat { width: 16px; height: 16px; }
.tick { width: 13px; height: 11px; }
.sw { display: block; width: 14px; height: 14px; border: 1px solid #222; background: #fff; }
.sw.red { background: #d40000; }
.sw.purple { background: #7a14c8; }
.sw.blue { background: #00f; }
.sw.green { background: #007f00; }
.sw.black { background: #000; }
.hscroll { display: flex; flex: none; height: 19px; margin-right: 3px; background: #f0f0f0; border: solid #a3a8ba; border-width: 0 1px 1px; }
.hscroll button { width: 20px; }
.hscroll svg { width: 8px; height: 10px; }
.track { flex: 1; }
.thumb { width: 57%; height: 100%; background: #cdcdcd; }

.osnap { display: flex; align-items: center; gap: 7px; height: 26px; margin: 6px 0 1px 5px; padding-left: 5px; border-left: 3px double #c0c4d2; }
.osnap label { display: flex; align-items: center; gap: 6px; }
.osnap input { appearance: none; width: 15px; height: 15px; margin: 0; border: 1px solid #333; background: #fff; display: grid; place-items: center; }
.osnap input:checked::after { content: ""; width: 9px; height: 5px; border: solid #333; border-width: 0 0 1px 1px; transform: translateY(-1px) rotate(-45deg); }
.osnap input:disabled { border-color: #bbb; background: #dcdcdc; }

.status { display: grid; grid-template-columns: 67px 103px 103px 103px 103px 1fr 89px 55px 63px 64px 98px 78px 128px 53px 181px 9px; height: 22px; border-top: 1px solid #a3a8ba; font-size: 14px; }
.status > * { display: flex; align-items: center; justify-content: center; padding-top: 2px; border-right: 1px solid #a3a8ba; white-space: nowrap; overflow: hidden; }
.status .on { background: #e2f1fb; font-weight: bold; }
.status > :last-child { border: 0; }
.status .layer { justify-content: flex-start; gap: 3px; padding-left: 4px; }
.layer i { width: 15px; height: 15px; background: #000; }
.status > :nth-child(15) { justify-content: flex-start; padding-left: 3px; }
```

FILE: gears.js
```js
// Spur gears: centre, tooth count, tip radius, root radius, angle of one tooth in degrees.
const gears = [
  { x: 545, y: 446, teeth: 17, tip: 90, root: 70, phase: -96.6 },
  { x: 724, y: 492, teeth: 16, tip: 85, root: 64.5, phase: -86.4 },
  { x: 777.5, y: 365.5, teeth: 13, tip: 72, root: 51, phase: -98.5 },
  { x: 687, y: 334.5, teeth: 7, tip: 42.5, root: 22.5, phase: -72 },
  { x: 617.5, y: 540, teeth: 8, tip: 47.5, root: 27, phase: -103.4 },
  { x: 650.5, y: 625.5, teeth: 11, tip: 62, root: 41, phase: -99.5 },
  { x: 852.5, y: 627, teeth: 23, tip: 119, root: 97.5, phase: -96 }
];

// Half tooth: offset as a share of the pitch, height as a share of the tooth depth.
const flank = [[0.37, 0.02], [0.34, -0.04], [0.31, 0.02], [0.285, 0.18], [0.25, 0.42], [0.19, 0.68], [0.12, 0.88], [0.05, 0.99]];
const tooth = flank.map(([a, h]) => [-a, h]).concat([...flank].reverse());
const ns = "http://www.w3.org/2000/svg";
const layer = document.getElementById("gears");

for (const g of gears) {
  const pitch = (2 * Math.PI) / g.teeth;
  const points = [];
  for (let i = 0; i < g.teeth; i++) {
    const mid = (g.phase * Math.PI) / 180 + i * pitch;
    for (const [a, h] of tooth) {
      const r = g.root + h * (g.tip - g.root);
      const t = mid + a * pitch;
      points.push((g.x + r * Math.cos(t)).toFixed(1) + "," + (g.y + r * Math.sin(t)).toFixed(1));
    }
  }
  const outline = document.createElementNS(ns, "polygon");
  outline.setAttribute("points", points.join(" "));
  const bore = document.createElementNS(ns, "circle");
  bore.setAttribute("cx", g.x);
  bore.setAttribute("cy", g.y);
  bore.setAttribute("r", 7);
  layer.append(outline, bore);
}
```
